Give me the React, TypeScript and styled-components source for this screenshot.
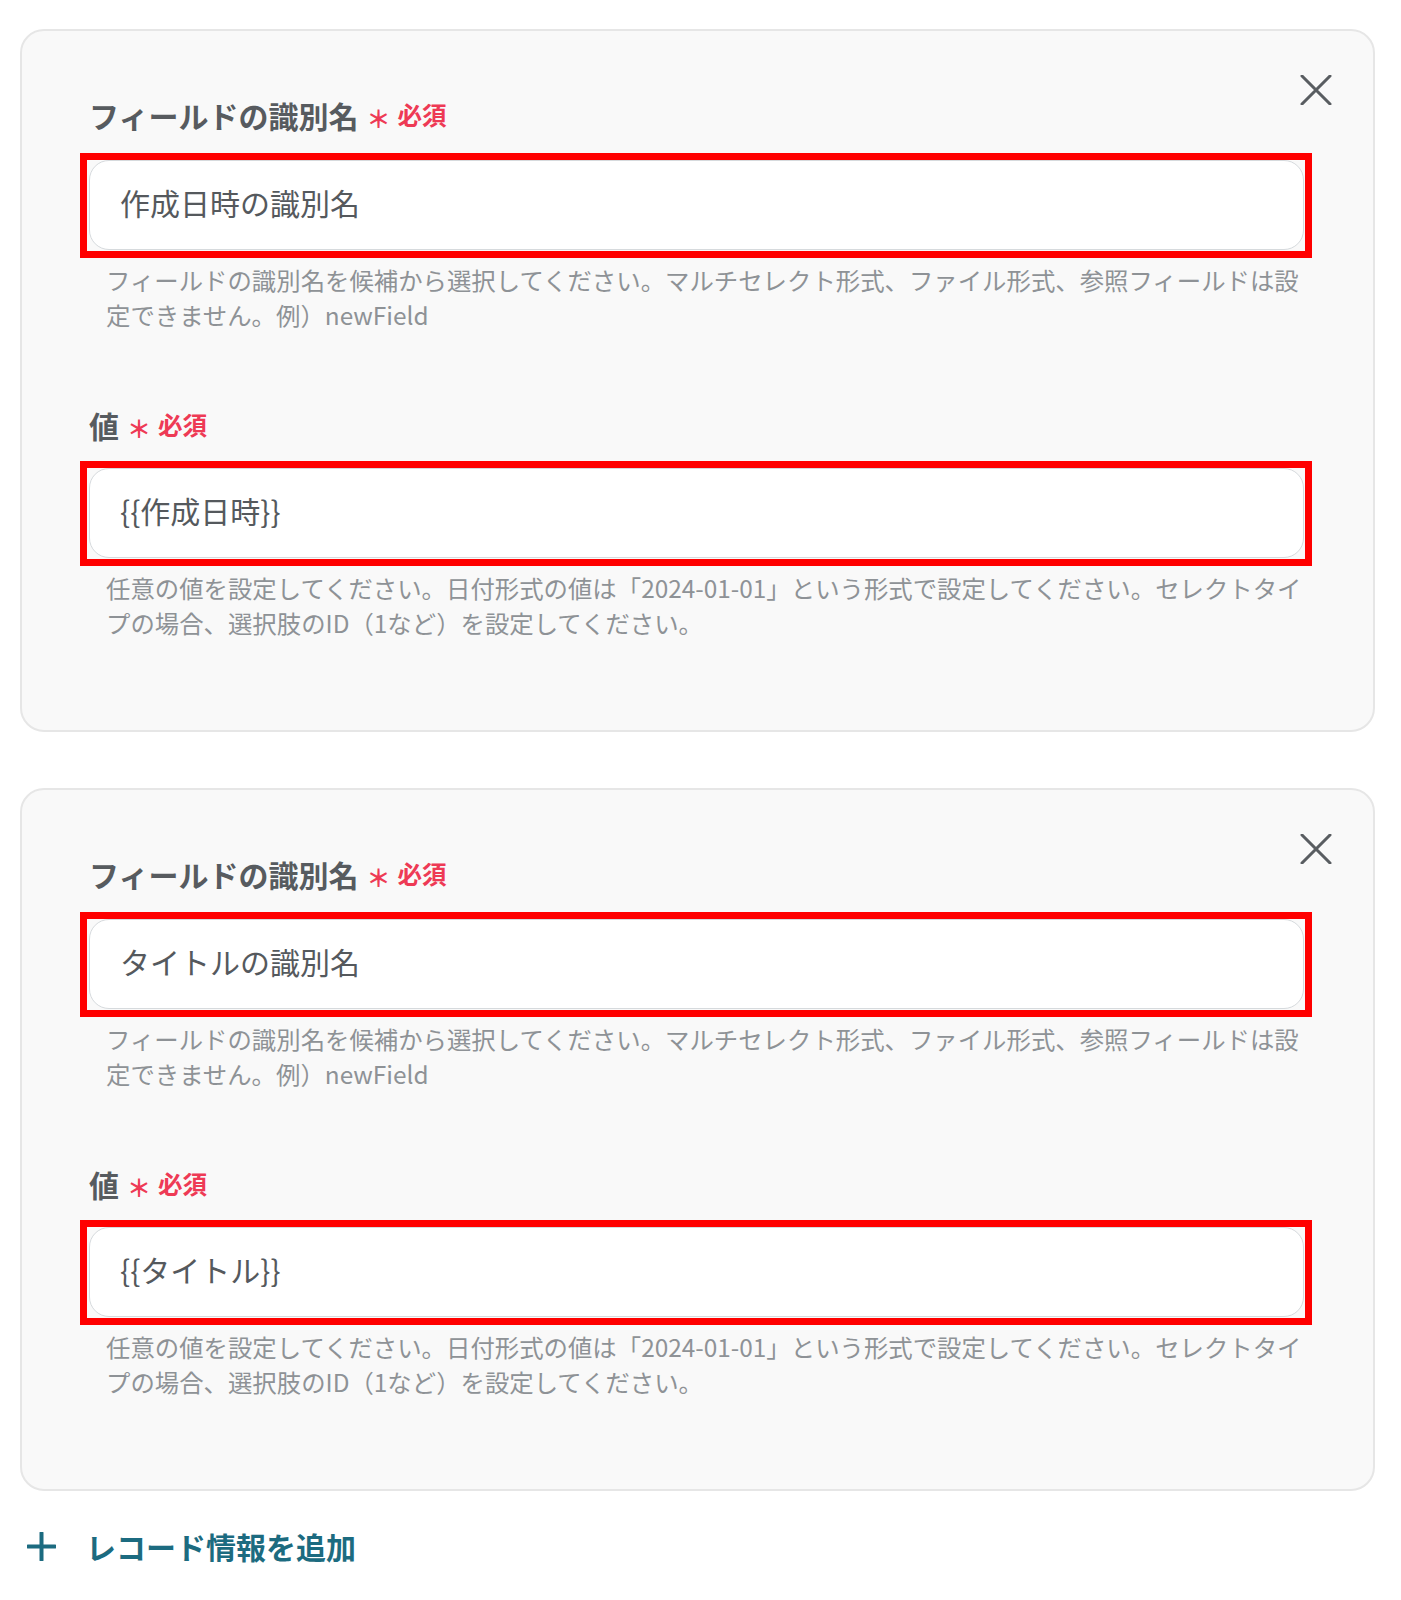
import React from "react";
import styled, { createGlobalStyle } from "styled-components";

const GlobalStyle = createGlobalStyle`
  html, body {
    margin: 0;
    padding: 0;
    background: #ffffff;
    font-family: "Noto Sans CJK JP", "Noto Sans", sans-serif;
  }
`;

const Page = styled.div`
  padding: 29px 26px 30px 20px;
  display: flex;
  flex-direction: column;
  width: 1355px;
`;

const CardList = styled.div`
  display: flex;
  flex-direction: column;
  gap: 56px;
`;

const Card = styled.section`
  position: relative;
  box-sizing: border-box;
  width: 1355px;
  background: #f9f9f9;
  border: 2px solid #e6e6e6;
  border-radius: 24px;
  padding: 63px 69px 90px 67px;
  display: flex;
  flex-direction: column;
`;

const CloseButton = styled.button`
  position: absolute;
  top: 44px;
  right: 41px;
  width: 32px;
  height: 30px;
  padding: 0;
  border: none;
  background: transparent;
  display: flex;
  align-items: center;
  justify-content: center;
  cursor: pointer;
`;

const Field = styled.div<{ $first?: boolean }>`
  display: flex;
  flex-direction: column;
  margin-top: ${(p) => (p.$first ? "0" : "72px")};
`;

const Label = styled.div`
  display: flex;
  align-items: center;
  height: 42px;
  font-size: 30px;
  font-weight: 700;
  color: #575b5f;
  line-height: 42px;
`;

const Asterisk = styled.span`
  color: #ee3a55;
  font-size: 24px;
  font-weight: 700;
  margin-left: 8px;
  position: relative;
  top: 3px;
`;

const Required = styled.span`
  color: #ee3a55;
  font-size: 24.5px;
  font-weight: 700;
  margin-left: 7px;
`;

const Highlight = styled.div<{ $gap: number }>`
  margin: ${(p) => p.$gap}px -8px 0 -9px;
  border: 7px solid #ff0000;
  padding: 0 1px 1px 2px;
  background: #f9f9f9;
`;

const Input = styled.div`
  box-sizing: border-box;
  height: 90px;
  background: #ffffff;
  border: 1.5px solid #d6dadd;
  border-radius: 20px;
  padding: 0 0 6px 30px;
  display: flex;
  align-items: center;
  font-size: 30px;
  color: #55595d;
`;

const Help = styled.p`
  margin: 4px 0 0 17px;
  width: 1205px;
  font-size: 24.4px;
  line-height: 35px;
  color: #8e9296;
`;

const AddButton = styled.button`
  margin-top: 34px;
  align-self: flex-start;
  display: flex;
  align-items: center;
  gap: 30px;
  padding: 0 0 0 7px;
  height: 42px;
  border: none;
  background: transparent;
  font-family: inherit;
  font-size: 30px;
  font-weight: 700;
  color: #1c6b80;
  cursor: pointer;
`;

const CloseIcon = () => (
  <svg width="32" height="30" viewBox="0 0 32 30" fill="none">
    <path d="M2 1 L30 29 M30 1 L2 29" stroke="#595d61" strokeWidth="3" strokeLinecap="round" />
  </svg>
);

const PlusIcon = () => (
  <svg width="29" height="29" viewBox="0 0 29 29" fill="none">
    <path d="M14.5 1 V28 M1 14.5 H28" stroke="#1c6b80" strokeWidth="4" strokeLinecap="round" />
  </svg>
);

type Record = { id: string; value: string };

const records: Record[] = [
  { id: "作成日時の識別名", value: "{{作成日時}}" },
  { id: "タイトルの識別名", value: "{{タイトル}}" },
];

const RequiredMark = () => (
  <>
    <Asterisk>＊</Asterisk>
    <Required>必須</Required>
  </>
);

export default function App() {
  return (
    <>
      <GlobalStyle />
      <Page>
        <CardList>
          {records.map((r) => (
            <Card key={r.id}>
              <CloseButton aria-label="削除">
                <CloseIcon />
              </CloseButton>
              <Field $first>
                <Label>
                  フィールドの識別名
                  <RequiredMark />
                </Label>
                <Highlight $gap={17}>
                  <Input>{r.id}</Input>
                </Highlight>
                <Help>
                  フィールドの識別名を候補から選択してください。マルチセレクト形式、ファイル形式、参照フィールドは設定できません。例）newField
                </Help>
              </Field>
              <Field>
                <Label>
                  値
                  <RequiredMark />
                </Label>
                <Highlight $gap={15}>
                  <Input>{r.value}</Input>
                </Highlight>
                <Help>
                  任意の値を設定してください。日付形式の値は「2024-01-01」という形式で設定してください。セレクトタイプの場合、選択肢のID（1など）を設定してください。
                </Help>
              </Field>
            </Card>
          ))}
        </CardList>
        <AddButton>
          <PlusIcon />
          レコード情報を追加
        </AddButton>
      </Page>
    </>
  );
}
